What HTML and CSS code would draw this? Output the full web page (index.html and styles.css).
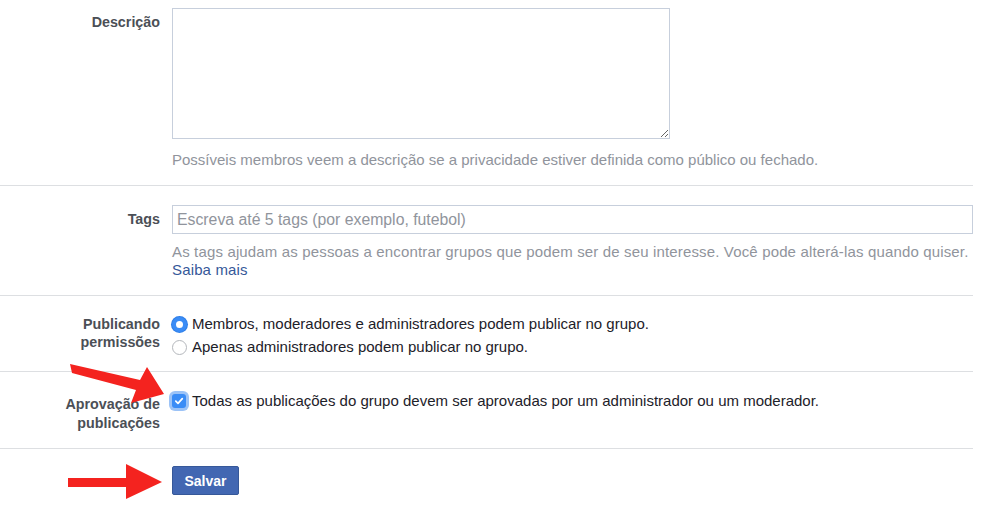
FILE: index.html
```html
<!DOCTYPE html>
<html>
  <head>
    <title>Configurações do grupo</title>
    <meta charset="UTF-8" />
    <link rel="stylesheet" href="styles.css">
  </head>

  <body>
    <div class="form">
      <div class="row row-desc">
        <div class="label">Descrição</div>
        <div class="field">
          <textarea class="desc-input"></textarea>
          <div class="help">Possíveis membros veem a descrição se a privacidade estiver definida como público ou fechado.</div>
        </div>
      </div>

      <div class="row row-tags">
        <div class="label label-mid">Tags</div>
        <div class="field">
          <input type="text" class="tags-input" placeholder="Escreva até 5 tags (por exemplo, futebol)" />
          <div class="help help-tags">
            As tags ajudam as pessoas a encontrar grupos que podem ser de seu interesse. Você pode alterá-las quando quiser.<br />
            <a href="#" class="link">Saiba mais</a>
          </div>
        </div>
      </div>

      <div class="row row-perm">
        <div class="label">Publicando<br />permissões</div>
        <div class="field options">
          <label class="option">
            <span class="radio checked"></span>
            Membros, moderadores e administradores podem publicar no grupo.
          </label>
          <label class="option">
            <span class="radio"></span>
            Apenas administradores podem publicar no grupo.
          </label>
        </div>
      </div>

      <div class="row row-approve">
        <div class="label label-approve">Aprovação de<br />publicações</div>
        <div class="field">
          <label class="option">
            <span class="checkbox">
              <svg width="10" height="10" viewBox="0 0 10 10">
                <path d="M1.8 5.2 L4 7.4 L8.3 2.6" fill="none" stroke="#fff" stroke-width="1.7" stroke-linecap="round" stroke-linejoin="round" />
              </svg>
            </span>
            Todas as publicações do grupo devem ser aprovadas por um administrador ou um moderador.
          </label>
        </div>
      </div>

      <div class="row row-save">
        <div></div>
        <div class="field">
          <button class="save-btn">Salvar</button>
        </div>
      </div>

      <!-- setas vermelhas por cima do formulário -->
      <svg class="arrows" width="984" height="510" viewBox="0 0 984 510">
        <polygon points="70,364 72,373 136,390 131,403 164,394 147,367 140,380" fill="#f4231f" />
        <polygon points="68,478 68,487 126,487 126,499 162,482 126,464 126,478" fill="#f4231f" />
      </svg>
    </div>
  </body>
</html>
```

FILE: styles.css
```css
body {
  margin: 0;
  background: #fff;
  font-family: "Liberation Sans", Arial, sans-serif;
  font-size: 15px;
  color: #1d2129;
}

.form {
  position: relative;
  width: 973px;
}

.row {
  display: grid;
  grid-template-columns: 160px 1fr;
  column-gap: 12px;
  border-bottom: 1px solid #dddfe2;
}

.label {
  text-align: right;
  font-size: 14.3px;
  font-weight: bold;
  color: #4b4f56;
  line-height: 18px;
}

.field {
  min-width: 0;
}

.row-desc {
  padding-top: 8px;
  padding-bottom: 16px;
}

.row-desc .label {
  padding-top: 5px;
}

.desc-input {
  display: block;
  box-sizing: border-box;
  width: 498px;
  height: 131px;
  border: 1px solid #c7cfdc;
  margin: 0;
  padding: 4px;
  font-family: inherit;
  font-size: 15px;
  resize: both;
}

.help {
  color: #90949c;
  line-height: 18px;
}

.row-desc .help {
  margin-top: 12px;
}

.row-tags {
  padding-top: 19px;
  padding-bottom: 16px;
}

.label-mid {
  padding-top: 5px;
}

.tags-input {
  display: block;
  box-sizing: border-box;
  width: 801px;
  height: 29px;
  border: 1px solid #c7cfdc;
  margin: 0;
  padding: 0 4px;
  font-family: inherit;
  font-size: 15.8px;
}

.tags-input::placeholder {
  color: #90949c;
}

.row-tags .help {
  margin-top: 9px;
}

.help-tags {
  white-space: nowrap;
  letter-spacing: 0.15px;
}

.link {
  color: #365899;
  text-decoration: none;
}

.row-perm {
  padding-top: 19px;
  padding-bottom: 15px;
}

.options {
  display: flex;
  flex-direction: column;
  gap: 5px;
}

.option {
  display: flex;
  align-items: center;
  gap: 5px;
  color: #1d2129;
  line-height: 18px;
}

.radio {
  box-sizing: border-box;
  width: 15px;
  height: 15px;
  border-radius: 50%;
  border: 1px solid #b4b7bc;
  background: #fff;
  flex-shrink: 0;
}

.radio.checked {
  border: 4px solid #3a8cf6;
  background: #fff;
  box-shadow: 0 0 0 1px #2f7fe8;
}

.row-approve {
  padding-top: 23px;
  padding-bottom: 15px;
}

.label-approve {
  line-height: 19px;
}

.row-approve .option {
  align-items: flex-start;
  margin-top: -3px;
  gap: 6px;
}

.checkbox {
  display: flex;
  align-items: center;
  justify-content: center;
  width: 14px;
  height: 14px;
  margin-top: 2px;
  border-radius: 3px;
  background: #3a8cf6;
  box-shadow: 0 0 0 3px #9cc3f7;
  flex-shrink: 0;
}

.row-save {
  border-bottom: none;
  padding-top: 17px;
  padding-bottom: 14px;
}

.save-btn {
  width: 67px;
  height: 29px;
  border: 1px solid #365899;
  border-radius: 2px;
  background: #4267b2;
  color: #fff;
  font-family: inherit;
  font-size: 14px;
  font-weight: bold;
  padding: 0;
}

.arrows {
  position: absolute;
  left: 0;
  top: 0;
  pointer-events: none;
}
```
